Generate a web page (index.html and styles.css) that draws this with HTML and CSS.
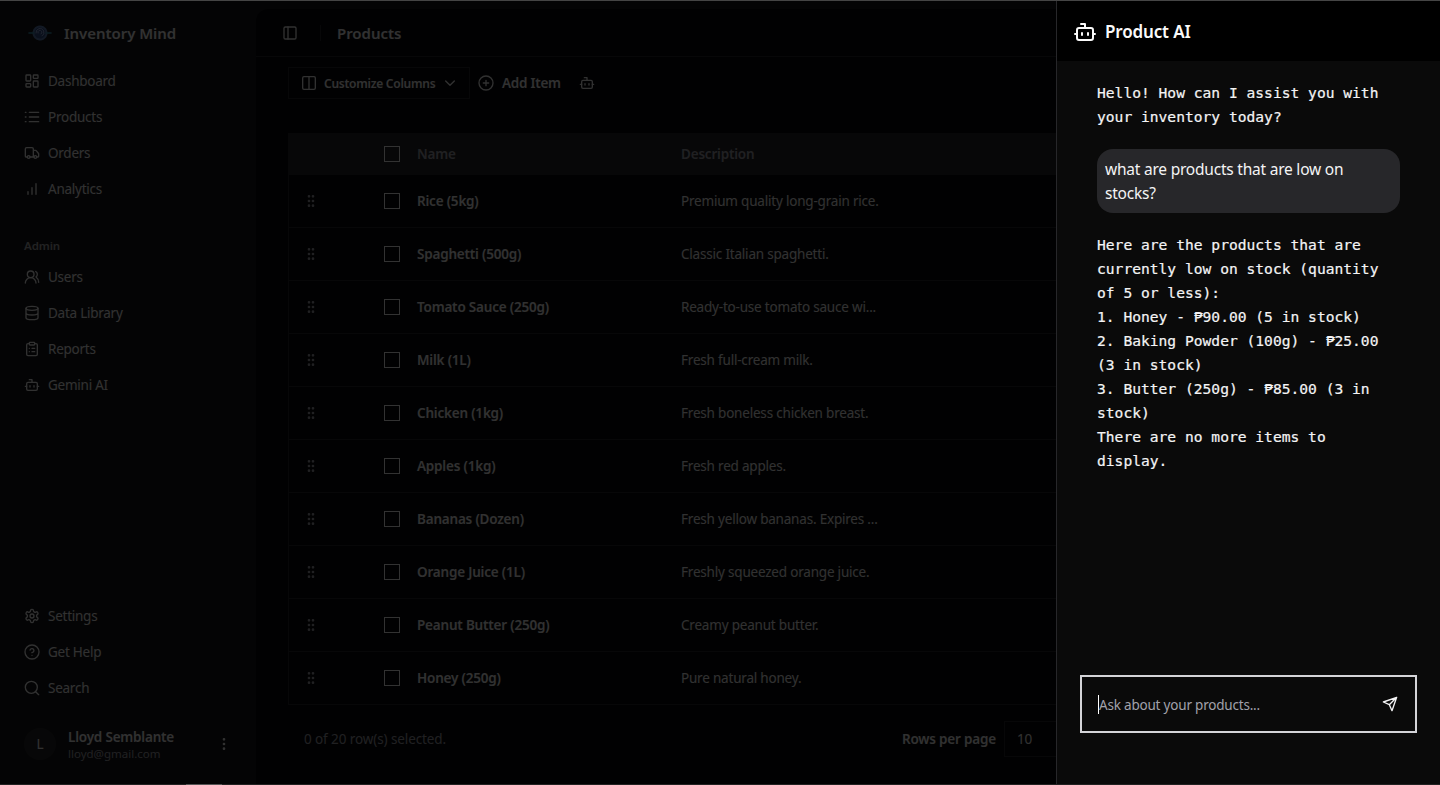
FILE: index.html
```html
<!DOCTYPE html>
<html lang="en">
<head>
<meta charset="UTF-8" />
<meta name="viewport" content="width=device-width, initial-scale=1" />
<title>Inventory Mind</title>
<link rel="stylesheet" href="styles.css">
</head>
<body>

<svg class="sprite" xmlns="http://www.w3.org/2000/svg">
  <symbol id="bot" viewBox="0 0 24 24"><path d="M12 8V4H8"/><rect width="16" height="12" x="4" y="8" rx="2"/><path d="M2 14h2M20 14h2M15 13v2M9 13v2"/></symbol>
  <symbol id="grip" viewBox="0 0 24 24"><g fill="currentColor"><circle cx="9" cy="5" r="1"/><circle cx="9" cy="12" r="1"/><circle cx="9" cy="19" r="1"/><circle cx="15" cy="5" r="1"/><circle cx="15" cy="12" r="1"/><circle cx="15" cy="19" r="1"/></g></symbol>
</svg>

<div class="app">
  <aside class="sidebar">
    <div class="brand">
      <svg class="logo" viewBox="0 0 24 18">
        <circle cx="12" cy="9" r="6.5" fill="#33508c" stroke="#5c7cb4" stroke-width="2" stroke-dasharray="1.5 1"/>
        <path d="M1 9h5M18 9h5" stroke="#3a93b0" stroke-width="1.6"/>
        <path d="M8 9a4 4 0 1 1 6 3M10 9a2 2 0 1 1 3 1" stroke="#9db2e6" stroke-width="1"/>
      </svg>
      <span>Inventory Mind</span>
    </div>

    <nav class="menu">
      <a><svg class="icon" viewBox="0 0 24 24"><rect width="7" height="9" x="3" y="3" rx="1"/><rect width="7" height="5" x="14" y="3" rx="1"/><rect width="7" height="9" x="14" y="12" rx="1"/><rect width="7" height="5" x="3" y="16" rx="1"/></svg>Dashboard</a>
      <a><svg class="icon" viewBox="0 0 24 24"><path d="M8 5h14M8 12h14M8 19h14M2 5h1M2 12h1M2 19h1"/></svg>Products</a>
      <a><svg class="icon" viewBox="0 0 24 24"><path d="M14 18V6a2 2 0 0 0-2-2H4a2 2 0 0 0-2 2v11a1 1 0 0 0 1 1h2M15 18H9M19 18h2a1 1 0 0 0 1-1v-3.65a1 1 0 0 0-.22-.624l-3.48-4.35A1 1 0 0 0 17.52 8H14"/><circle cx="17" cy="18" r="2"/><circle cx="7" cy="18" r="2"/></svg>Orders</a>
      <a><svg class="icon" viewBox="0 0 24 24"><path d="M12 20V10M18 20V4M6 20v-4"/></svg>Analytics</a>
    </nav>

    <h4>Admin</h4>
    <nav class="menu">
      <a><svg class="icon" viewBox="0 0 24 24"><path d="M18 21a8 8 0 0 0-16 0"/><circle cx="10" cy="8" r="5"/><path d="M22 20c0-3.37-2-6.5-4-8a5 5 0 0 0-.45-8.3"/></svg>Users</a>
      <a><svg class="icon" viewBox="0 0 24 24"><ellipse cx="12" cy="5" rx="9" ry="3"/><path d="M3 5v14a9 3 0 0 0 18 0V5M3 12a9 3 0 0 0 18 0"/></svg>Data Library</a>
      <a><svg class="icon" viewBox="0 0 24 24"><rect width="8" height="4" x="8" y="2" rx="1"/><path d="M16 4h2a2 2 0 0 1 2 2v14a2 2 0 0 1-2 2H6a2 2 0 0 1-2-2V6a2 2 0 0 1 2-2h2M12 11h4M12 16h4M8 11h.01M8 16h.01"/></svg>Reports</a>
      <a><svg class="icon"><use href="#bot"/></svg>Gemini AI</a>
    </nav>

    <nav class="menu menu-bottom">
      <a><svg class="icon" viewBox="0 0 24 24"><path d="M12.22 2h-.44a2 2 0 0 0-2 2v.18a2 2 0 0 1-1 1.73l-.43.25a2 2 0 0 1-2 0l-.15-.08a2 2 0 0 0-2.73.73l-.22.38a2 2 0 0 0 .73 2.73l.15.1a2 2 0 0 1 1 1.72v.51a2 2 0 0 1-1 1.74l-.15.09a2 2 0 0 0-.73 2.73l.22.38a2 2 0 0 0 2.73.73l.15-.08a2 2 0 0 1 2 0l.43.25a2 2 0 0 1 1 1.73V20a2 2 0 0 0 2 2h.44a2 2 0 0 0 2-2v-.18a2 2 0 0 1 1-1.73l.43-.25a2 2 0 0 1 2 0l.15.08a2 2 0 0 0 2.73-.73l.22-.39a2 2 0 0 0-.73-2.73l-.15-.08a2 2 0 0 1-1-1.74v-.5a2 2 0 0 1 1-1.74l.15-.09a2 2 0 0 0 .73-2.73l-.22-.38a2 2 0 0 0-2.73-.73l-.15.08a2 2 0 0 1-2 0l-.43-.25a2 2 0 0 1-1-1.73V4a2 2 0 0 0-2-2z"/><circle cx="12" cy="12" r="3"/></svg>Settings</a>
      <a><svg class="icon" viewBox="0 0 24 24"><circle cx="12" cy="12" r="10.5"/><path d="M9.09 9a3 3 0 0 1 5.83 1c0 2-3 3-3 3M12 17h.01"/></svg>Get Help</a>
      <a><svg class="icon" viewBox="0 0 24 24"><circle cx="11" cy="11" r="9"/><path d="m22 22-4.5-4.5"/></svg>Search</a>
    </nav>

    <div class="user">
      <span class="avatar">L</span>
      <div class="user-info">
        <strong>Lloyd Semblante</strong>
        <small>lloyd@gmail.com</small>
      </div>
      <svg class="icon" viewBox="0 0 24 24"><g fill="currentColor"><circle cx="12" cy="5" r="1"/><circle cx="12" cy="12" r="1"/><circle cx="12" cy="19" r="1"/></g></svg>
    </div>
  </aside>

  <main>
    <header class="topbar">
      <svg class="icon" viewBox="0 0 24 24"><rect width="18" height="18" x="3" y="3" rx="2"/><path d="M9 3v18"/></svg>
      <span class="divider"></span>
      <h1>Products</h1>
    </header>

    <div class="toolbar">
      <button class="columns">
        <svg class="icon" viewBox="0 0 24 24"><rect width="19" height="19" x="2.500" y="2.500" rx="2"/><path d="M12 2.500v19"/></svg>
        <span>Customize Columns</span>
        <svg class="icon" viewBox="0 0 24 24"><path d="m5.500 9 6.500 6.500L18.500 9"/></svg>
      </button>
      <button class="add">
        <svg class="icon" viewBox="0 0 24 24"><circle cx="12" cy="12" r="10.5"/><path d="M8 12h8M12 8v8"/></svg>
        Add Item
      </button>
      <button class="ai"><svg class="icon"><use href="#bot"/></svg></button>
    </div>

    <div class="table">
      <div class="row head"><span></span><i class="check"></i><span>Name</span><span>Description</span></div>
      <div class="row"><svg class="grip"><use href="#grip"/></svg><i class="check"></i><b>Rice (5kg)</b><span>Premium quality long-grain rice.</span></div>
      <div class="row"><svg class="grip"><use href="#grip"/></svg><i class="check"></i><b>Spaghetti (500g)</b><span>Classic Italian spaghetti.</span></div>
      <div class="row"><svg class="grip"><use href="#grip"/></svg><i class="check"></i><b>Tomato Sauce (250g)</b><span>Ready-to-use tomato sauce wi...</span></div>
      <div class="row"><svg class="grip"><use href="#grip"/></svg><i class="check"></i><b>Milk (1L)</b><span>Fresh full-cream milk.</span></div>
      <div class="row"><svg class="grip"><use href="#grip"/></svg><i class="check"></i><b>Chicken (1kg)</b><span>Fresh boneless chicken breast.</span></div>
      <div class="row"><svg class="grip"><use href="#grip"/></svg><i class="check"></i><b>Apples (1kg)</b><span>Fresh red apples.</span></div>
      <div class="row"><svg class="grip"><use href="#grip"/></svg><i class="check"></i><b>Bananas (Dozen)</b><span>Fresh yellow bananas. Expires ...</span></div>
      <div class="row"><svg class="grip"><use href="#grip"/></svg><i class="check"></i><b>Orange Juice (1L)</b><span>Freshly squeezed orange juice.</span></div>
      <div class="row"><svg class="grip"><use href="#grip"/></svg><i class="check"></i><b>Peanut Butter (250g)</b><span>Creamy peanut butter.</span></div>
      <div class="row"><svg class="grip"><use href="#grip"/></svg><i class="check"></i><b>Honey (250g)</b><span>Pure natural honey.</span></div>
    </div>

    <footer class="pager">
      <span class="selected">0 of 20 row(s) selected.</span>
      <b>Rows per page</b>
      <span class="select">10</span>
    </footer>
  </main>
</div>

<div class="overlay"></div>

<section class="sheet">
  <header class="sheet-head"><svg class="icon"><use href="#bot"/></svg><h2>Product AI</h2></header>
  <div class="chat">
    <pre>Hello! How can I assist you with
your inventory today?</pre>
    <p class="question">what are products that are low on<br>stocks?</p>
    <pre>Here are the products that are
currently low on stock (quantity
of 5 or less):
1. Honey - ₱90.00 (5 in stock)
2. Baking Powder (100g) - ₱25.00
(3 in stock)
3. Butter (250g) - ₱85.00 (3 in
stock)
There are no more items to
display.</pre>
  </div>
  <div class="ask">
    <span class="caret"></span>
    <span class="placeholder">Ask about your products...</span>
    <svg class="icon" viewBox="0 0 24 24"><path d="M22 2 15 22l-4-9-9-4zM22 2 11 13"/></svg>
  </div>
</section>

<div class="edge-top"></div>
<div class="edge-bottom"><span></span></div>

</body>
</html>
```
FILE: styles.css
```css
* {
  box-sizing: border-box;
}
body {
  margin: 0;
  height: 785px;
  overflow: hidden;
  background: #18181b;
  color: #f4f4f5;
  font-family: "Noto Sans", "Open Sans", sans-serif;
  font-size: 13.5px;
  letter-spacing: -0.2px;
}
h1, h2, h4, p, pre {
  margin: 0;
}
b, strong, h1, h2, h4 {
  font-weight: 600;
}
svg {
  fill: none;
  stroke: currentColor;
  stroke-width: 2;
  stroke-linecap: round;
  stroke-linejoin: round;
  flex-shrink: 0;
}
.sprite {
  display: none;
}
.icon {
  width: 16px;
  height: 16px;
}
.app {
  display: flex;
  height: 785px;
}

/* Sidebar */
.sidebar {
  width: 256px;
  padding: 17px 16px 17px;
  display: flex;
  flex-direction: column;
}
.brand {
  display: flex;
  align-items: center;
  gap: 12px;
  height: 32px;
  padding-left: 12px;
  font-size: 15px;
  font-weight: 600;
  letter-spacing: -0.05px;
}
.logo {
  width: 24px;
  height: 18px;
}
.menu {
  display: flex;
  flex-direction: column;
  gap: 4px;
  margin-top: 16px;
}
.menu a {
  display: flex;
  align-items: center;
  gap: 8px;
  height: 32px;
  padding-left: 8px;
  letter-spacing: -0.25px;
}
.sidebar h4 {
  margin-top: 24px;
  padding-left: 8px;
  height: 32px;
  line-height: 33px;
  font-size: 11.5px;
  letter-spacing: -0.1px;
  color: #aaaaae;
}
.sidebar h4 + .menu {
  margin-top: 0;
}
.sidebar .menu-bottom {
  margin-top: auto;
}
.user {
  display: flex;
  align-items: center;
  height: 48px;
  margin-top: 16px;
  padding: 0 8px;
}
.avatar {
  width: 32px;
  height: 32px;
  border-radius: 50%;
  background: #27272a;
  line-height: 32px;
  text-align: center;
}
.user-info {
  flex: 1;
  display: flex;
  flex-direction: column;
  margin-left: 12px;
  padding-top: 1px;
  line-height: 18px;
}
.user-info small {
  font-size: 11.5px;
  line-height: 16px;
  letter-spacing: 0;
  color: #a1a1aa;
}

/* Main panel */
main {
  flex: 1;
  margin-top: 9px;
  border-radius: 12px 0 0 0;
  background: #09090b;
}
.topbar {
  display: flex;
  align-items: center;
  height: 48px;
  padding: 0 26px;
  border-bottom: 1px solid #27272a;
}
.topbar h1 {
  font-size: 15px;
  letter-spacing: -0.05px;
}
.divider {
  width: 1px;
  height: 16px;
  margin: 0 16px 0 22px;
  background: #27272a;
}
.toolbar {
  display: flex;
  align-items: center;
  height: 32px;
  margin: 10px 32px 0;
}
.toolbar button {
  display: flex;
  align-items: center;
  padding: 0;
  border: none;
  background: none;
  color: inherit;
  font: inherit;
  font-weight: 600;
  letter-spacing: -0.25px;
  white-space: nowrap;
}
.toolbar .columns {
  width: 182px;
  height: 32px;
  padding: 0 12px;
  gap: 7px;
  border: 1px solid #27272a;
  font-size: 12px;
}
.toolbar .columns span {
  flex: 1;
  text-align: left;
}
.toolbar .add {
  gap: 8px;
  margin-left: 8px;
}
.toolbar .ai {
  margin-left: 18px;
}
.table {
  margin: 34px 0 0 32px;
  border: 1px solid #27272a;
  border-right: none;
}
.row {
  display: grid;
  grid-template-columns: 95px 33px 264px 1fr;
  align-items: center;
  height: 53px;
  border-bottom: 1px solid #27272a;
}
.row:last-child {
  height: 52px;
  border-bottom: none;
}
.head {
  height: 41px;
  background: #27272a;
  color: #a1a1aa;
  font-weight: 600;
}
.check {
  width: 16px;
  height: 16px;
  border: 1px solid #fafafa;
}
.grip {
  width: 16px;
  height: 16px;
  margin-left: 14px;
  color: #a1a1aa;
}
.pager {
  display: flex;
  align-items: center;
  margin-top: 16px;
  padding-left: 48px;
  height: 36px;
}
.selected {
  width: 598px;
  color: #a1a1aa;
  letter-spacing: -0.1px;
}
.pager b {
  width: 102px;
}
.select {
  width: 80px;
  height: 36px;
  padding-left: 12px;
  border: 1px solid #27272a;
  line-height: 34px;
}

.overlay {
  position: fixed;
  inset: 0;
  background: rgba(0,0,0,0.8);
}

/* AI sheet */
.sheet {
  position: fixed;
  top: 0;
  right: 0;
  bottom: 0;
  width: 384px;
  display: flex;
  flex-direction: column;
  border-left: 1px solid #27272a;
  background: #0a0a0a;
}
.sheet-head {
  display: flex;
  align-items: center;
  gap: 8px;
  height: 61px;
  padding: 2px 16px 0;
  background: #000;
  color: #fafafa;
}
.sheet-head .icon {
  width: 24px;
  height: 24px;
}
.sheet-head h2 {
  font-size: 17px;
  letter-spacing: -0.15px;
}
.chat {
  flex: 1;
  padding: 20px 40px;
}
.chat pre {
  font-family: "DejaVu Sans Mono", monospace;
  font-size: 14.62px;
  line-height: 24px;
  letter-spacing: 0;
  -webkit-text-stroke: 0.2px;
}
.question {
  margin: 20px 0;
  padding: 8px;
  border-radius: 16px;
  background: #27272a;
  font-size: 15.5px;
  line-height: 24px;
  letter-spacing: -0.22px;
  white-space: nowrap;
}
.ask {
  display: flex;
  align-items: center;
  height: 58px;
  margin: 0 23px 52px;
  padding: 0 17px 0 16px;
  border: 2px solid #d4d4d8;
}
.caret {
  width: 1px;
  height: 19px;
  background: #fff;
}
.placeholder {
  flex: 1;
  padding-top: 2px;
  color: #a1a1aa;
}

/* Window edges */
.edge-top, .edge-bottom {
  position: fixed;
  left: 0;
  right: 0;
  height: 1px;
}
.edge-top {
  top: 0;
  background: #454545;
}
.edge-bottom {
  bottom: 0;
  background: #222;
}
.edge-bottom span {
  display: block;
  width: 36px;
  height: 1px;
  margin-left: 186px;
  background: #555;
}
```
